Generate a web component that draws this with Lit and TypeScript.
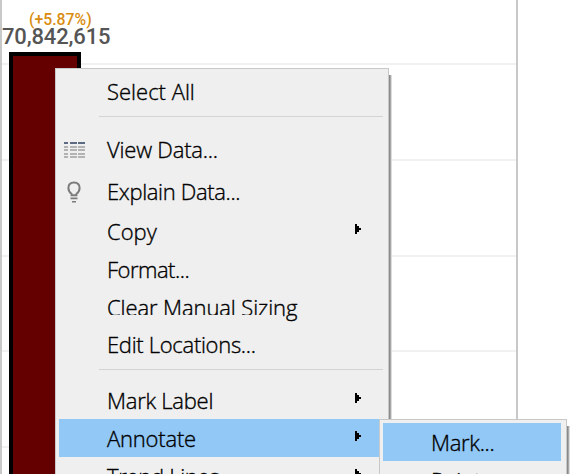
import { LitElement, html, css, svg, nothing } from "lit";
import { customElement } from "lit/decorators.js";

interface Item {
  label: string;
  kind: string;
  spacing: number;
  icon?: "table" | "bulb";
  sub?: boolean;
}

const ITEMS: (Item | null)[] = [
  { label: "Select All", kind: "first", spacing: 0 },
  null,
  { label: "View Data...", kind: "tall", spacing: -0.2, icon: "table" },
  { label: "Explain Data...", kind: "mid", spacing: -0.35, icon: "bulb" },
  { label: "Copy", kind: "", spacing: 0, sub: true },
  { label: "Format...", kind: "", spacing: -0.5 },
  { label: "Clear Manual Sizing", kind: "clipped", spacing: -0.1 },
  { label: "Edit Locations...", kind: "", spacing: -0.3 },
  null,
  { label: "Mark Label", kind: "", spacing: -0.25, sub: true },
  { label: "Annotate", kind: "active", spacing: -0.2, sub: true },
  { label: "Trend Lines", kind: "", spacing: -0.3, sub: true },
];

const tableIcon = html`<svg class="icon" width="22" height="17" viewBox="0 0 22 17">
  ${[0, 4, 7, 11, 14].map((y, i) =>
    [0, 6, 14].map((x, j) => svg`<rect x=${x} y=${y} width=${[4, 7, 7][j]} height="2" fill=${i ? "#b3b3b3" : "#5d6b82"} />`)
  )}
</svg>`;

const bulbIcon = html`<svg class="icon bulb" width="14" height="22" viewBox="0 0 14 22">
  <path d="M4.6 14.2V13C2.6 11.4 1.4 9.4 1.4 7C1.4 3.4 3.6 1.4 7 1.4S12.6 3.4 12.6 7C12.6 9.4 11.4 11.4 9.4 13V14.2Z" fill="none" stroke="#7c7c7c" stroke-width="2" />
  <path d="M3.5 17.4H10.5M5 20.8H9" stroke="#7c7c7c" stroke-width="1.6" />
</svg>`;

const arrow = html`<svg class="arrow" width="6" height="10" viewBox="0 0 6 10" shape-rendering="crispEdges">
  <path d="M0 0H2V2H4V4H6V6H4V8H2V10H0Z" />
</svg>`;

@customElement("app-root")
export class AppRoot extends LitElement {
  static styles = css`
    :host { display: block; position: relative; width: 586px; height: 474px; overflow: hidden; background: #fff; }
    .chart { box-sizing: border-box; width: 518px; height: 474px; border-left: 2px solid #c8c8c8; border-right: 2px solid #c8c8c8;
      display: flex; flex-direction: column; }
    .band { box-sizing: border-box; flex: none; height: 96px; border-bottom: 2px solid #f1f1f1; }
    .band.top { height: 65px; }
    .band:nth-child(4) { height: 95px; }
    .mark { position: absolute; left: 9px; top: 11px; width: 72px; height: 463px; display: flex; flex-direction: column; }
    .growth, .value { font-family: Roboto, "Liberation Sans", sans-serif; font-weight: 500; white-space: nowrap; }
    .growth { height: 16px; line-height: 18px; padding-left: 20px; font-size: 15.8px; color: #d98c10; }
    .value { height: 25px; line-height: 20px; margin-left: -7px; font-size: 22px; letter-spacing: -0.15px; color: #555; }
    .bar { flex: 1; box-sizing: border-box; background: #640000; border: 4px solid #000; border-bottom: 0; }
    .menu { position: absolute; box-sizing: border-box; background: #efefef; border: 1px solid #c8c8c8;
      font-family: "Open Sans", "Noto Sans", sans-serif; font-size: 22px; font-weight: 300; color: #000; -webkit-text-stroke: 0.35px #000; }
    .menu::after { content: ""; position: absolute; left: 100%; top: 6px; bottom: 0; width: 3px; margin-left: 1px;
      background: linear-gradient(90deg, #8a8a8a 0 1px, #a8a8a8 1px 2px, #dcdcdc 2px 3px); }
    .main { left: 55px; top: 68px; width: 334px; height: 420px; padding: 3px 5px 0 3px; }
    .side { left: 379px; top: 419px; width: 188px; height: 80px; padding: 3px 5px 0 3px; }
    .row { position: relative; display: flex; height: 38px; white-space: nowrap; }
    .label { line-height: 38px; margin-left: 48px; flex: 1; height: 38px; }
    .row.first { height: 44px; }
    .row.tall { height: 42px; }
    .row.mid { height: 40px; }
    .row.clipped { height: 37px; }
    .row.clipped .label { line-height: 39px; }
    .row.clipped::after { content: ""; position: absolute; left: 46px; top: 27px; width: 178px; height: 2px; background: #efefef; }
    .row.active { background: #91c8f6; margin-right: -5px; }
    .row.active.chosen { margin-right: 0; }
    .row.active .arrow { margin-right: 27px; }
    .arrow { margin: 12px 22px 0 0; }
    .icon { position: absolute; left: 5px; top: 12px; }
    .icon.bulb { left: 8px; top: 9px; }
    .rule { height: 1px; background: #d3d3d3; margin: 0 0 13px 40px; }
    .rule.low { margin: 6px 0 11px 40px; }
  `;

  private row(i: Item) {
    return html`<div class="row ${i.kind}">
      ${i.icon === "table" ? tableIcon : i.icon === "bulb" ? bulbIcon : nothing}
      <span class="label" style="letter-spacing:${i.spacing}px">${i.label}</span>
      ${i.sub ? arrow : nothing}
    </div>`;
  }

  render() {
    return html`
      <div class="chart">
        <div class="band top"></div>
        ${[0, 1, 2, 3].map(() => html`<div class="band"></div>`)}
      </div>
      <div class="mark">
        <div class="growth">(+5.87%)</div>
        <div class="value">70,842,615</div>
        <div class="bar"></div>
      </div>
      <div class="menu main">
        ${ITEMS.map((i, n) => (i ? this.row(i) : html`<div class="rule ${n > 1 ? "low" : ""}"></div>`))}
      </div>
      <div class="menu side">
        ${this.row({ label: "Mark...", kind: "active chosen", spacing: -0.3 })}
        ${this.row({ label: "Point...", kind: "", spacing: -0.2 })}
      </div>
    `;
  }
}
